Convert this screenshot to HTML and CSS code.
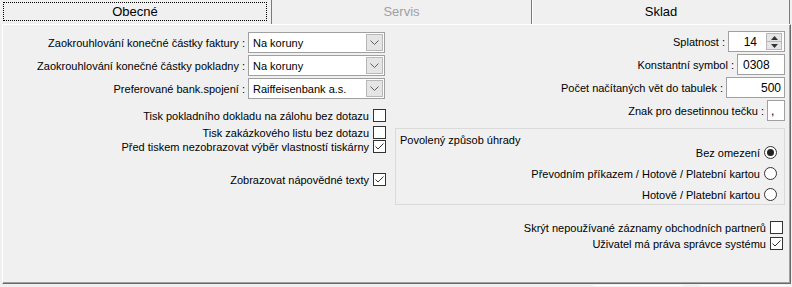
FILE: index.html
```html
<!DOCTYPE html>
<html lang="cs">
<head>
<meta charset="utf-8">
<title>Nastavení</title>
<link rel="stylesheet" href="styles.css">
</head>
<body>
<div class="window">
  <div class="tabs">
    <div class="tab tab-active"><span class="focus">Obecné</span></div>
    <div class="tab tab-disabled">Servis</div>
    <div class="tab tab-last">Sklad</div>
  </div>
  <div class="panel">
    <div class="col-left">
      <div class="field">
        <span class="lbl">Zaokrouhlování konečné částky faktury :</span>
        <div class="combo"><span class="combo-text">Na koruny</span><span class="dd"><svg width="9" height="6" viewBox="0 0 9 6"><polyline points="0.5,0.5 4.5,4.5 8.5,0.5" fill="none" stroke="#606060" stroke-width="1"/></svg></span></div>
      </div>
      <div class="field">
        <span class="lbl">Zaokrouhlování konečné částky pokladny :</span>
        <div class="combo"><span class="combo-text">Na koruny</span><span class="dd"><svg width="9" height="6" viewBox="0 0 9 6"><polyline points="0.5,0.5 4.5,4.5 8.5,0.5" fill="none" stroke="#606060" stroke-width="1"/></svg></span></div>
      </div>
      <div class="field">
        <span class="lbl">Preferované bank.spojení :</span>
        <div class="combo"><span class="combo-text">Raiffeisenbank a.s.</span><span class="dd"><svg width="9" height="6" viewBox="0 0 9 6"><polyline points="0.5,0.5 4.5,4.5 8.5,0.5" fill="none" stroke="#606060" stroke-width="1"/></svg></span></div>
      </div>
      <div class="chk chk-l1"><span>Tisk pokladního dokladu na zálohu bez dotazu</span><span class="box"></span></div>
      <div class="chk chk-l2"><span>Tisk zakázkového listu bez dotazu</span><span class="box"></span></div>
      <div class="chk chk-l3"><span>Před tiskem nezobrazovat výběr vlastností tiskárny</span><span class="box"><svg width="11" height="11" viewBox="0 0 11 11"><polyline points="1.5,5.5 4,8 9.5,2.5" fill="none" stroke="#333" stroke-width="1"/></svg></span></div>
      <div class="chk chk-l4"><span>Zobrazovat nápovědné texty</span><span class="box"><svg width="11" height="11" viewBox="0 0 11 11"><polyline points="1.5,5.5 4,8 9.5,2.5" fill="none" stroke="#333" stroke-width="1"/></svg></span></div>
    </div>
    <div class="col-right">
      <div class="field">
        <span class="lbl">Splatnost :</span>
        <div class="edit spin"><span class="val">14</span><span class="spinbtns"><span class="sb"><svg width="7" height="4" viewBox="0 0 7 4"><polygon points="0,4 3.5,0 7,4" fill="#333"/></svg></span><span class="sb"><svg width="7" height="4" viewBox="0 0 7 4"><polygon points="0,0 3.5,4 7,0" fill="#333"/></svg></span></span></div>
      </div>
      <div class="field">
        <span class="lbl">Konstantní symbol :</span>
        <div class="edit ks"><span class="val-left">0308</span></div>
      </div>
      <div class="field">
        <span class="lbl">Počet načítaných vět do tabulek :</span>
        <div class="edit pocet"><span class="val">500</span></div>
      </div>
      <div class="field">
        <span class="lbl">Znak pro desetinnou tečku :</span>
        <div class="edit znak"><span class="val-left">,</span></div>
      </div>
      <div class="group">
        <div class="group-title">Povolený způsob úhrady</div>
        <div class="radio"><span>Bez omezení</span><span class="rb rb-on"></span></div>
        <div class="radio"><span>Převodním příkazem / Hotově / Platební kartou</span><span class="rb"></span></div>
        <div class="radio"><span>Hotově / Platební kartou</span><span class="rb"></span></div>
      </div>
      <div class="chk chk-r1"><span>Skrýt nepoužívané záznamy obchodních partnerů</span><span class="box"></span></div>
      <div class="chk chk-r2"><span>Uživatel má práva správce systému</span><span class="box"><svg width="11" height="11" viewBox="0 0 11 11"><polyline points="1.5,5.5 4,8 9.5,2.5" fill="none" stroke="#333" stroke-width="1"/></svg></span></div>
    </div>
  </div>
  <div class="under"><span class="edge edge-1"></span><span class="edge edge-2"></span></div>
</div>
</body>
</html>
```

FILE: styles.css
```css
* { box-sizing: border-box; }
html, body {
  margin: 0;
  padding: 0;
  background: #f0f0f0;
}
body {
  width: 792px;
  height: 287px;
  overflow: hidden;
  font-family: "Liberation Sans", Arial, sans-serif;
  font-size: 11px;
  color: #000;
}
.window {
  width: 792px;
  height: 287px;
  display: flex;
  flex-direction: column;
}
.tabs {
  display: flex;
  height: 24px;
  font-size: 13px;
}
.tab {
  display: flex;
  align-items: center;
  justify-content: center;
  padding-bottom: 2px;
}
.tab-active {
  width: 272px;
  border-right: 1px solid #7a7a7a;
  padding: 2px 4px 3px 3px;
}
.focus {
  flex: 1;
  height: 19px;
  border: 1px dotted #000;
  display: flex;
  align-items: center;
  justify-content: center;
}
.tab-disabled {
  width: 260px;
  color: #a0a0a0;
  border-right: 1px solid #7a7a7a;
}
.tab-last {
  flex: 1;
  border-left: 1px solid #fff;
  border-right: 1px solid #7a7a7a;
  margin-right: 2px;
}
.panel {
  margin-left: 2px;
  width: 789px;
  height: 260px;
  border-top: 1px solid #fff;
  border-left: 1px solid #fff;
  border-right: 1px solid #696969;
  border-bottom: 1px solid #696969;
  box-shadow: inset -1px -1px 0 #a0a0a0;
  display: grid;
  grid-template-columns: 383px 389px;
  column-gap: 10px;
  padding: 6px 3px 0 0;
}
.col-left, .col-right {
  display: flex;
  flex-direction: column;
  align-items: flex-end;
}
.field {
  display: flex;
  align-items: center;
  height: 21px;
  margin-bottom: 2px;
}
.col-left .field:first-child { margin-top: 1px; }
.col-left .field { margin-right: 1px; }
.lbl {
  margin-right: 3px;
  white-space: nowrap;
}
.combo {
  width: 137px;
  height: 21px;
  background: #fff;
  border: 1px solid #a0a0a0;
  display: flex;
  align-items: center;
  padding: 1px 1px 1px 4px;
}
.combo-text { flex: 1; }
.dd {
  width: 17px;
  height: 17px;
  background: #e5e5e5;
  border: 1px solid #b8b8b8;
  display: flex;
  align-items: center;
  justify-content: center;
}
.edit {
  height: 21px;
  background: #fff;
  border: 1px solid #a0a0a0;
  display: flex;
  align-items: center;
  padding: 0 5px;
}
.spin { width: 57px; padding: 1px 2px 1px 4px; }
.spin .val { flex: 1; text-align: right; margin-right: 9px; font-size: 12px; }
.spinbtns {
  width: 16px;
  height: 17px;
  display: flex;
  flex-direction: column;
  border: 1px solid #b8b8b8;
  background: #e5e5e5;
}
.sb {
  flex: 1;
  display: flex;
  align-items: center;
  justify-content: center;
}
.sb + .sb { border-top: 1px solid #b8b8b8; }
.ks { width: 48px; font-size: 12px; }
.pocet { width: 59px; justify-content: flex-end; padding-right: 3px; font-size: 12px; }
.znak { width: 18px; padding: 0 3px; font-size: 12px; }
.val-left { flex: 1; }
.chk {
  display: flex;
  align-items: center;
  height: 13px;
  white-space: nowrap;
}
.chk > span:first-child { margin-right: 4px; }
.box {
  width: 13px;
  height: 13px;
  border: 1px solid #333;
  background: #fff;
  display: flex;
  align-items: center;
  justify-content: center;
}
.chk-l1 { margin-top: 8px; }
.chk-l2 { margin-top: 4px; }
.chk-l3 { margin-top: 1px; }
.chk-l4 { margin-top: 20px; }
.group {
  width: 390px;
  height: 77px;
  margin-top: 5px;
  border: 1px solid #dadada;
  display: flex;
  flex-direction: column;
  align-items: flex-end;
  padding: 5px 7px 0 4px;
}
.group-title {
  align-self: flex-start;
  height: 12px;
  line-height: 12px;
  margin-bottom: 0;
}
.radio {
  display: flex;
  align-items: center;
  height: 13px;
  margin-bottom: 8px;
  white-space: nowrap;
}
.radio > span:first-child { margin-right: 4px; }
.rb {
  width: 13px;
  height: 13px;
  border-radius: 50%;
  border: 1px solid #333;
  background: #fff;
  display: flex;
  align-items: center;
  justify-content: center;
}
.rb-on::after {
  content: "";
  width: 7px;
  height: 7px;
  border-radius: 50%;
  background: #222;
}
.chk-r1 { margin-top: 16px; margin-right: 2px; }
.chk-r2 { margin-top: 3px; margin-right: 2px; }
.under {
  position: relative;
  flex: 1;
}
.edge {
  position: absolute;
  top: 1px;
  height: 1px;
  background: #fff;
}
.edge-1 { left: 593px; width: 90px; }
.edge-2 { left: 700px; width: 90px; }
```
